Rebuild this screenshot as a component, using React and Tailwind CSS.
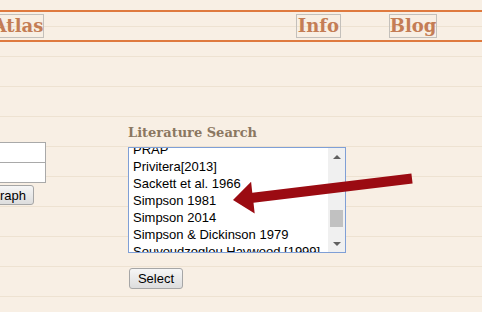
const items = [
  "PRAP",
  "Privitera[2013]",
  "Sackett et al. 1966",
  "Simpson 1981",
  "Simpson 2014",
  "Simpson & Dickinson 1979",
  "Souvoudzoglou Haywood [1999]",
];

function NavBox({ label, className }) {
  return (
    <div
      className={`h-[24px] border border-[#c4c0bb] flex items-center justify-center text-[18px] font-bold leading-none text-[#c47d55] ${className}`}
      style={{ fontFamily: '"DejaVu Serif", "Liberation Serif", serif' }}
    >
      {label}
    </div>
  );
}

function GreyButton({ children, className }) {
  return (
    <button
      type="button"
      className={`border border-[#a6a6a6] rounded-[3px] bg-gradient-to-b from-[#f6f6f6] to-[#dddddd] text-[13px] leading-none text-black ${className}`}
    >
      {children}
    </button>
  );
}

function ListBox() {
  return (
    <div className="w-[218px] h-[106px] border border-[#7f9fd6] bg-white flex overflow-hidden">
      <div className="flex-1 overflow-hidden">
        <ul className="-mt-[7px] pl-[4px]">
          {items.map((it) => (
            <li key={it} className="h-[17px] leading-[17px] text-[13px] text-black whitespace-nowrap">
              {it}
            </li>
          ))}
        </ul>
      </div>
      <div className="w-[17px] bg-[#f0f0f0] flex flex-col items-center">
        <div className="h-[17px] flex items-center justify-center">
          <div className="w-0 h-0 border-l-[4px] border-r-[4px] border-b-[4px] border-l-transparent border-r-transparent border-b-[#606060]" />
        </div>
        <div className="flex-1 w-full relative">
          <div className="absolute left-[2px] right-[2px] top-[45px] h-[17px] bg-[#c1c1c1]" />
        </div>
        <div className="h-[17px] flex items-center justify-center">
          <div className="w-0 h-0 border-l-[4px] border-r-[4px] border-t-[4px] border-l-transparent border-r-transparent border-t-[#606060]" />
        </div>
      </div>
    </div>
  );
}

export default function App() {
  return (
    <div
      className="w-[482px] h-[312px] overflow-hidden relative bg-[#f8efe4] bg-[repeating-linear-gradient(180deg,#f8efe4_0px,#f8efe4_26px,#eee2d1_26px,#eee2d1_27px,#f8efe4_27px,#f8efe4_30px)]"
      style={{ fontFamily: '"Liberation Sans", Arial, sans-serif' }}
    >
      <div className="h-[10px]" />
      <header className="h-[32px] border-y-2 border-[#df7a3f] flex items-center">
        <NavBox label="Atlas" className="w-[54px] -ml-[10px] pl-[2px]" />
        <NavBox label="Info" className="w-[45px] ml-[252px]" />
        <NavBox label="Blog" className="w-[48px] ml-[48px]" />
      </header>

      <main className="flex pt-[83px]">
        {/* left form, mostly off screen */}
        <div className="w-[46px] shrink-0 flex flex-col items-end mt-[17px]">
          <div className="w-[100px] h-[21px] border border-[#a9a9a9] bg-white" />
          <div className="w-[100px] h-[21px] border border-[#a9a9a9] bg-white -mt-px" />
          <GreyButton className="w-[80px] h-[20px] mt-[2px] mr-[12px] text-right pr-[7px]">Graph</GreyButton>
        </div>

        {/* literature search */}
        <div className="ml-[82px] flex flex-col">
          <h2
            className="text-[13px] font-bold leading-[16px] text-[#8b7761] h-[22px]"
            style={{ fontFamily: '"DejaVu Serif", "Liberation Serif", serif' }}
          >
            Literature Search
          </h2>
          <ListBox />
          <GreyButton className="w-[54px] h-[21px] mt-[15px] ml-px">Select</GreyButton>
        </div>
      </main>

      <svg className="absolute inset-0 pointer-events-none" width="482" height="312">
        <polygon
          points="233,200 254.7,213.6 253.5,202.7 412.6,183.5 411.4,173.5 252.3,192.7 251.1,181.8"
          fill="#9b0b12"
        />
      </svg>
    </div>
  );
}
